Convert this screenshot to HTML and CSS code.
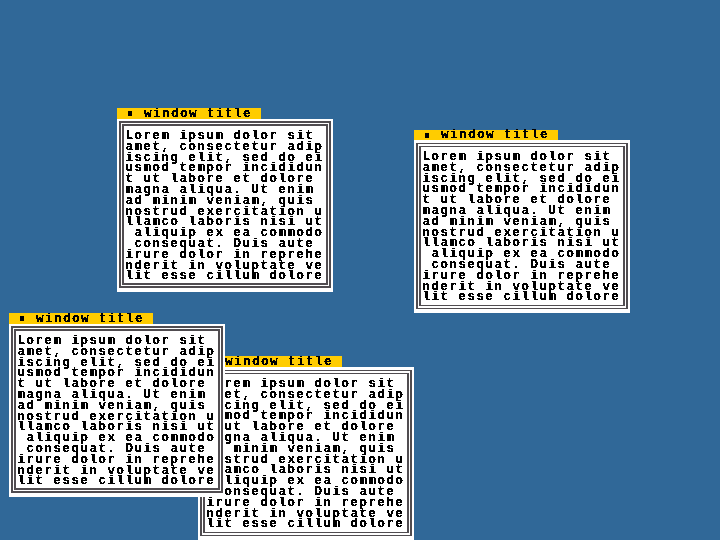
FILE: index.html
```
<!DOCTYPE html>
<html lang="en">
<head>
<meta charset="utf-8">
<title>Windows</title>
<link rel="stylesheet" href="styles.css">
</head>
<body>
<svg class="defs" width="0" height="0" aria-hidden="true"><filter id="crisp" x="0" y="0" width="1" height="1" color-interpolation-filters="sRGB"><feComponentTransfer><feFuncA type="discrete" tableValues="0 1 1"/></feComponentTransfer></filter></svg>
<main class="desktop">
<section class="window w1"><h2 class="title"><i class="mark"></i><span class="label">window title</span></h2><div class="pane"><div class="frame"><div class="inner"><pre class="text">Lorem ipsum dolor sit
amet, consectetur adip
iscing elit, sed do ei
usmod tempor incididun
t ut labore et dolore
magna aliqua. Ut enim
ad minim veniam, quis
nostrud exercitation u
llamco laboris nisi ut
 aliquip ex ea commodo
 consequat. Duis aute
irure dolor in reprehe
nderit in voluptate ve
lit esse cillum dolore</pre></div></div></div></section>
<section class="window w2"><h2 class="title"><i class="mark"></i><span class="label">window title</span></h2><div class="pane"><div class="frame"><div class="inner"><pre class="text">Lorem ipsum dolor sit
amet, consectetur adip
iscing elit, sed do ei
usmod tempor incididun
t ut labore et dolore
magna aliqua. Ut enim
ad minim veniam, quis
nostrud exercitation u
llamco laboris nisi ut
 aliquip ex ea commodo
 consequat. Duis aute
irure dolor in reprehe
nderit in voluptate ve
lit esse cillum dolore</pre></div></div></div></section>
<section class="window w3"><h2 class="title"><i class="mark"></i><span class="label">window title</span></h2><div class="pane"><div class="frame"><div class="inner"><pre class="text">Lorem ipsum dolor sit
amet, consectetur adip
iscing elit, sed do ei
usmod tempor incididun
t ut labore et dolore
magna aliqua. Ut enim
ad minim veniam, quis
nostrud exercitation u
llamco laboris nisi ut
 aliquip ex ea commodo
 consequat. Duis aute
irure dolor in reprehe
nderit in voluptate ve
lit esse cillum dolore</pre></div></div></div></section>
<section class="window w4"><h2 class="title"><i class="mark"></i><span class="label">window title</span></h2><div class="pane"><div class="frame"><div class="inner"><pre class="text">Lorem ipsum dolor sit
amet, consectetur adip
iscing elit, sed do ei
usmod tempor incididun
t ut labore et dolore
magna aliqua. Ut enim
ad minim veniam, quis
nostrud exercitation u
llamco laboris nisi ut
 aliquip ex ea commodo
 consequat. Duis aute
irure dolor in reprehe
nderit in voluptate ve
lit esse cillum dolore</pre></div></div></div></section>
</main>
</body>
</html>
```
FILE: styles.css
```
* { box-sizing: border-box; }
body { margin: 0; }
.defs { display: block; }
.desktop { position: relative; width: 720px; height: 540px; overflow: hidden; background: #306898; }
.window { position: absolute; width: 216px; color: #000; }
.w1 { left: 117px; top: 108px; }
.w2 { left: 414px; top: 130px; }
.w3 { left: 9px; top: 313px; z-index: 2; }
.w4 { left: 198px; top: 356px; z-index: 1; }
.title, .text { margin: 0; font: bold 12.5px/10.8px "Liberation Mono", monospace; letter-spacing: 1.5px; white-space: pre; }
.title { display: flex; align-items: center; width: 144px; height: 11px; padding-left: 11px; background: #ffcc00; }
.w2 .title { height: 10px; }
.label, .text { filter: url(#crisp); }
.label { padding-top: 1px; }
.mark { width: 4px; height: 5px; margin-right: 12px; background: #000; }
.pane { height: 173px; padding: 2px 2px 4px; background: #fff; }
.frame { height: 167px; padding: 1px; border: 2px solid #504c50; }
.inner { height: 100%; padding: 5px 0 0 1px; border: 2px solid #504c50; }
.w2 .pane, .w4 .pane { padding-top: 3px; }
.w2 .frame, .w4 .frame { height: 166px; padding: 2px 1px; border-top-width: 1px; border-bottom-width: 1px; }
.w2 .inner, .w4 .inner { border-top-width: 1px; border-bottom-width: 1px; }
.text { width: 202px; padding-left: 0.4px; }
```
